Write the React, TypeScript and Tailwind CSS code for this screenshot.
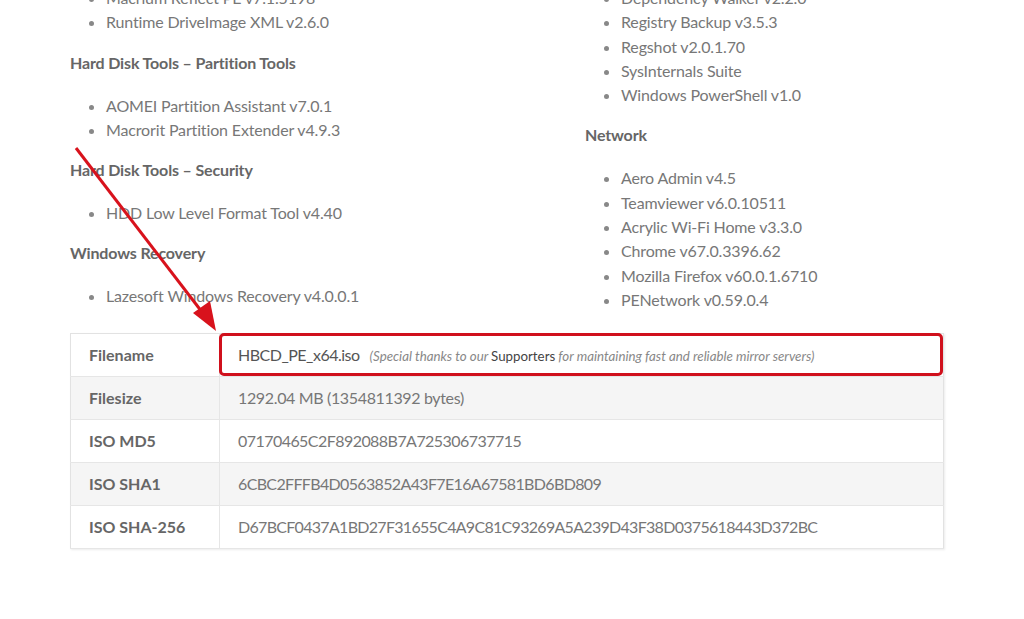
import React from 'react';

const leftGroups = [
  { title: null, items: ['Macrium Reflect PE v7.1.5198', 'Runtime DriveImage XML v2.6.0'] },
  { title: 'Hard Disk Tools – Partition Tools', items: ['AOMEI Partition Assistant v7.0.1', 'Macrorit Partition Extender v4.9.3'] },
  { title: 'Hard Disk Tools – Security', items: ['HDD Low Level Format Tool v4.40'] },
  { title: 'Windows Recovery', items: ['Lazesoft Windows Recovery v4.0.0.1'] },
];

const rightGroups = [
  {
    title: null,
    items: ['Dependency Walker v2.2.0', 'Registry Backup v3.5.3', 'Regshot v2.0.1.70', 'SysInternals Suite', 'Windows PowerShell v1.0'],
  },
  {
    title: 'Network',
    items: [
      'Aero Admin v4.5',
      'Teamviewer v6.0.10511',
      'Acrylic Wi-Fi Home v3.3.0',
      'Chrome v67.0.3396.62',
      'Mozilla Firefox v60.0.1.6710',
      'PENetwork v0.59.0.4',
    ],
  },
];

const rows = [
  { label: 'Filesize', value: '1292.04 MB (1354811392 bytes)', track: 'tracking-[-0.35px]' },
  { label: 'ISO MD5', value: '07170465C2F892088B7A725306737715', track: 'tracking-[-0.55px]' },
  { label: 'ISO SHA1', value: '6CBC2FFFB4D0563852A43F7E16A67581BD6BD809', track: 'tracking-[-0.65px]' },
  { label: 'ISO SHA-256', value: 'D67BCF0437A1BD27F31655C4A9C81C93269A5A239D43F38D0375618443D372BC', track: 'tracking-[-0.7px]' },
];

type Group = { title: string | null; items: string[] };

const Column: React.FC<{ groups: Group[]; className?: string }> = ({ groups, className }) => (
  <div className={className}>
    {groups.map((g, i) => (
      <div key={i}>
        {g.title && (
          <h4 className="font-bold text-[16px] leading-[24px] text-[#666] mb-[19px] tracking-[-0.15px]">{g.title}</h4>
        )}
        <ul className="list-disc pl-[36px] mb-[16px] marker:text-[#888]">
          {g.items.map((item) => (
            <li key={item} className="leading-[24.3px] tracking-[-0.15px]">
              {item}
            </li>
          ))}
        </ul>
      </div>
    ))}
  </div>
);

export default function App() {
  return (
    <div
      className="relative w-[1024px] h-[619px] overflow-hidden bg-white text-[16px] text-[#777]"
      style={{ fontFamily: 'Lato, "Open Sans", sans-serif' }}
    >
      <div className="-mt-[14px] pl-[70px] pr-[80px]">
        <div className="flex">
          <Column groups={leftGroups} className="w-[515px]" />
          <Column groups={rightGroups} className="flex-1" />
        </div>

        <table className="mt-[5px] w-[874px] border-collapse border border-[#e2e2e2] shadow-[1px_1px_2px_rgba(0,0,0,0.08)]">
          <tbody>
            <tr className="h-[43px] bg-white">
              <td className="w-[149px] pl-[18px] font-bold text-[#666] border-r border-b border-[#e6e6e6]">Filename</td>
              <td className="relative pl-[18px] border-b border-[#e6e6e6]">
                <span className="text-[#555] tracking-[-0.5px]">HBCD_PE_x64.iso</span>
                <span className="ml-[10px] italic text-[13.3px] text-[#888]">
                  (Special thanks to our <span className="not-italic text-[#444]">Supporters</span> for maintaining fast and reliable mirror servers)
                </span>
                <div className="absolute -left-[1px] -top-[1px] right-0 bottom-0 border-[3px] border-[#d0101c] rounded-[5px]" />
              </td>
            </tr>
            {rows.map((r, i) => (
              <tr key={r.label} className={`h-[43px] ${i % 2 === 0 ? 'bg-[#f5f5f5]' : 'bg-white'}`}>
                <td className="w-[149px] pl-[18px] font-bold text-[#666] border-r border-b border-[#e6e6e6]">{r.label}</td>
                <td className={`pl-[18px] border-b border-[#e6e6e6] ${r.track}`}>{r.value}</td>
              </tr>
            ))}
          </tbody>
        </table>
      </div>

      <svg className="absolute left-0 top-0 pointer-events-none" width="1024" height="619">
        <line x1="76" y1="148" x2="202" y2="312" stroke="#d8121c" strokeWidth="3" />
        <polygon points="216,331 193,313 210,301" fill="#d8121c" />
      </svg>
    </div>
  );
}
